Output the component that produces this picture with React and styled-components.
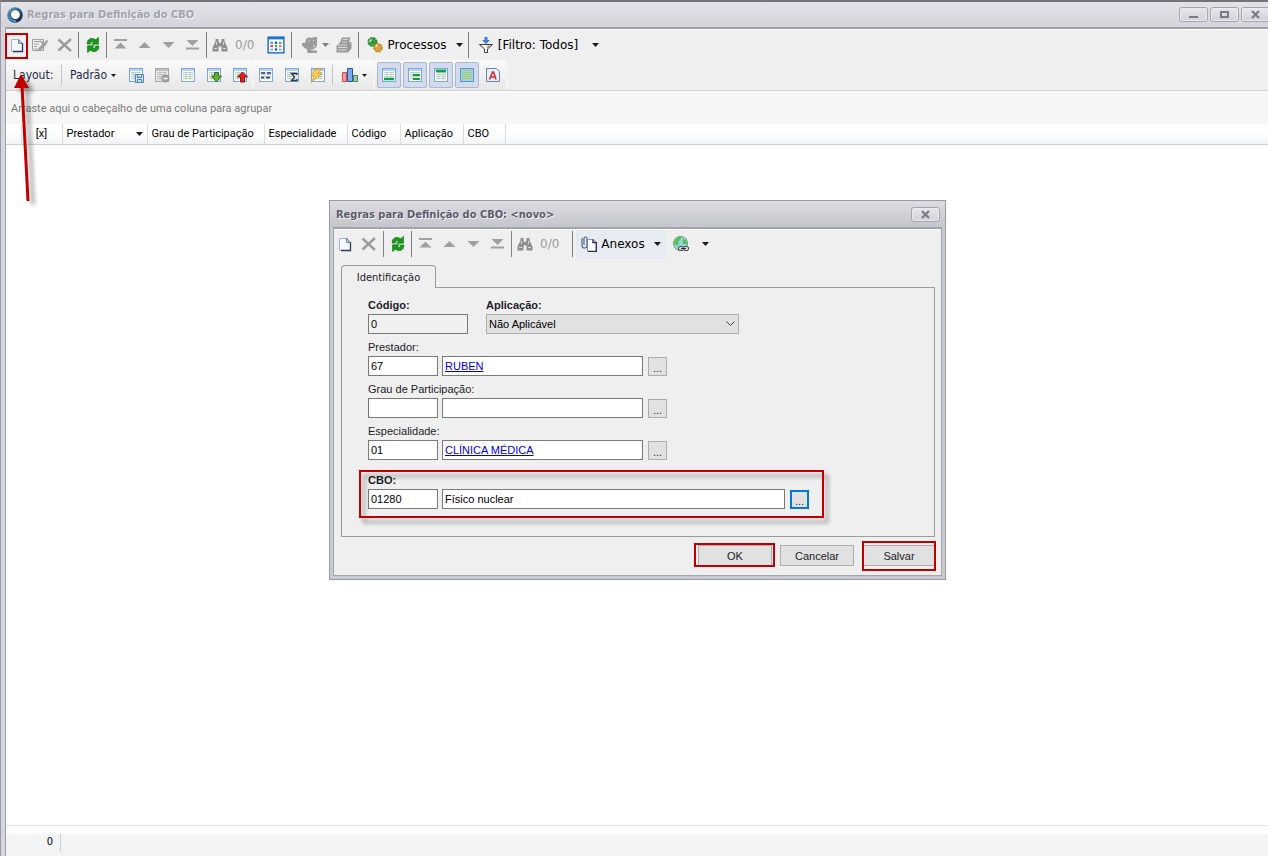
import React, {useState} from 'react';
import styled, {createGlobalStyle, css} from 'styled-components';

const uiFont = '"DejaVu Sans Condensed", "DejaVu Sans", sans-serif';
const toolFont = '"DejaVu Sans", sans-serif';
const gridFont = 'Roboto, sans-serif';
const formFont = '"Liberation Sans", sans-serif';
const red = '#c00000';

const GlobalStyle = createGlobalStyle`
  * {
    box-sizing: border-box;
  }
  body {
    margin: 0;
    background: #ffffff;
    font-family: ${uiFont};
    font-size: 11px;
    color: #000000;
  }
  button, input, select {
    font: inherit;
    color: inherit;
    margin: 0;
  }
`;

/* ---------- main window ---------- */

const Window = styled.div`
  position: relative;
  display: flex;
  flex-direction: column;
  min-height: 100vh;
  overflow: hidden;
  border-top: 2px solid #747476;
  border-left: 1px solid #9a9aa6;
  background: #d6d6de;
`;

const TitleBar = styled.header`
  display: flex;
  align-items: center;
  gap: 4px;
  height: 25px;
  padding-left: 6px;
  background: linear-gradient(#e3e3e9, #d3d3da);
`;

const Title = styled.h1`
  flex: 1;
  margin: 0;
  font-size: 11px;
  font-weight: bold;
  color: ${(props) => props.$active ? '#5c5c6e' : '#a2a2ac'};
  text-shadow: 1px 1px 0 #f2f2f6;
`;

const CaptionButton = styled.button`
  display: flex;
  align-items: center;
  justify-content: center;
  width: 29px;
  height: 15px;
  padding: 0;
  border: 1px solid #a4a4ae;
  border-radius: 3px;
  background: linear-gradient(#e8e8ec, #d0d0d6);
  box-shadow: inset 0 0 0 1px #ececf0;
`;

const CaptionButtons = styled.div`
  display: flex;
  gap: 2px;
  margin-right: -2px;
`;

const Client = styled.main`
  display: flex;
  flex: 1;
  flex-direction: column;
  margin-left: 4px;
  border-top: 2px solid #9c9ca4;
  border-left: 1px solid #a0a0ac;
  background: #ffffff;
`;

/* ---------- toolbars ---------- */

const Toolbar = styled.div`
  display: flex;
  align-items: center;
  height: ${(props) => props.$height || 31}px;
  border-top: 1px solid #ffffff;
  background: #efefef;
  font-family: ${toolFont};
  font-size: 12px;
  color: #000000;
`;

const ToolButton = styled.button`
  position: relative;
  display: flex;
  align-items: center;
  justify-content: center;
  gap: 4px;
  width: ${(props) => props.$width || 24}px;
  height: 26px;
  padding: 0;
  border: 0;
  background: transparent;
  white-space: nowrap;
  svg {
    flex: none;
  }
`;

const Divider = styled.span`
  width: 1px;
  height: 26px;
  margin: 0 ${(props) => props.$gap || 2}px;
  background: #808080;
`;

const Counter = styled.span`
  width: 34px;
  padding-left: 4px;
  color: #9c9c9c;
`;

const LayoutBar = styled.div`
  display: flex;
  align-items: stretch;
  height: 31px;
  border-bottom: 1px solid #d2d2d2;
  background: #efefef;
  font-size: 12px;
  color: #1e2a48;
`;

const BarGroup = styled.div`
  display: flex;
  align-items: center;
  gap: 2px;
  padding: 0 ${(props) => props.$end || 0}px 0 ${(props) => props.$start || 0}px;
  border-right: 2px solid #f4f4f4;
  background: linear-gradient(#fbfbfb, #e7e7e7);
`;

const BarButton = styled.button`
  display: flex;
  align-items: center;
  justify-content: center;
  gap: 4px;
  width: ${(props) => props.$width || 24}px;
  height: 26px;
  padding: 0;
  border: 1px solid transparent;
  border-radius: 2px;
  background: transparent;
  svg {
    flex: none;
  }
  ${(props) => props.$on && css`
    border-color: #aab8d4;
    background: #d3dcec;
  `}
`;

const BarLabel = styled.span`
  width: 46px;
`;

const BarDivider = styled.span`
  width: 1px;
  height: 20px;
  background: #c4c4c8;
`;

/* ---------- grid ---------- */

const GroupPanel = styled.div`
  display: flex;
  align-items: center;
  height: 33px;
  padding-left: 5px;
  border-top: 2px solid #fbfbfb;
  background: #f6f6f6;
  font-family: ${gridFont};
  color: #7c7c7c;
`;

const GridTable = styled.table`
  width: 100%;
  table-layout: fixed;
  border-collapse: collapse;
  font-family: ${gridFont};
`;

const HeadCell = styled.th`
  width: ${(props) => props.$width ? `${props.$width}px` : 'auto'};
  height: 20px;
  padding: 0 4px;
  border-right: 1px solid #dcdce0;
  border-bottom: 1px solid #d0d0d4;
  background: linear-gradient(#ffffff 40%, #f2f3f5);
  font-weight: normal;
  text-align: ${(props) => props.$center ? 'center' : 'left'};
  white-space: nowrap;
  &:last-child {
    border-right: 0;
  }
`;

const SortLabel = styled.span`
  display: flex;
  align-items: center;
  justify-content: space-between;
`;

const GridFooter = styled.footer`
  margin-top: auto;
  padding-top: 8px;
  border-top: 1px solid #e6e6e8;
`;

const FooterCells = styled.div`
  display: flex;
  height: 22px;
  background: #f3f4f6;
`;

const FooterCount = styled.span`
  width: 55px;
  height: 18px;
  padding-right: 7px;
  border-right: 1px solid #cfcfd3;
  line-height: 15px;
  text-align: right;
`;

/* ---------- dialog ---------- */

const Dialog = styled.section`
  position: absolute;
  top: 198px;
  left: 328px;
  width: 617px;
  padding: 0 3px 3px;
  border: 1px solid #9a9aa6;
  background: #c9c9d1;
`;

const DialogTitle = styled.header`
  display: flex;
  align-items: center;
  height: 26px;
  margin: 0 -3px;
  padding: 0 5px 0 6px;
  background: linear-gradient(#dcdce1, #c5c5cc);
`;

const DialogBody = styled.div`
  border: 1px solid #a4a4ac;
  border-top-width: 2px;
  background: #efefef;
  font-family: ${formFont};
  color: #1c1c28;
`;

const SplitButton = styled.div`
  display: flex;
  height: 28px;
  margin-left: 1px;
  border: 1px solid #e2eaf4;
  background: #e8ecf2;
`;

const Tabs = styled.div`
  margin: 7px 6px 0 7px;
`;

const Tab = styled.button`
  position: relative;
  display: block;
  width: 95px;
  height: 23px;
  margin-bottom: -1px;
  padding: 0;
  border: 1px solid #9c9c9c;
  border-bottom: 0;
  border-radius: 4px 4px 0 0;
  background: #efefef;
  font-size: 11px;
  font-family: ${uiFont};
`;

const TabPanel = styled.form`
  display: flex;
  flex-direction: column;
  align-items: flex-start;
  gap: 7px;
  padding: 11px 26px 27px;
  border: 1px solid #9c9c9c;
`;

const FieldRow = styled.div`
  display: flex;
  gap: 18px;
`;

const Field = styled.div`
  position: relative;
  margin-top: ${(props) => props.$spaced ? 7 : 0}px;
`;

const Label = styled.label`
  display: block;
  height: 15px;
  line-height: 13px;
  font-weight: ${(props) => props.$strong ? 'bold' : 'normal'};
`;

const Controls = styled.div`
  display: flex;
  gap: 4px;
`;

const TextBox = styled.input`
  display: block;
  width: ${(props) => props.$width}px;
  height: 20px;
  padding: 0 2px;
  border: 1px solid #7a7a7a;
  border-radius: 0;
  outline: 0;
  background: ${(props) => props.readOnly ? '#f0f0f0' : '#ffffff'};
  color: #000000;
`;

const LinkBox = styled.div`
  width: 201px;
  height: 20px;
  padding: 0 2px;
  border: 1px solid #7a7a7a;
  background: #ffffff;
  line-height: 18px;
  a {
    color: #0000e0;
  }
`;

const SelectWrap = styled.div`
  position: relative;
  svg {
    position: absolute;
    top: 7px;
    right: 4px;
    pointer-events: none;
  }
`;

const Select = styled.select`
  appearance: none;
  display: block;
  width: 253px;
  height: 20px;
  padding: 0 2px;
  border: 1px solid #adadad;
  border-radius: 0;
  background: #e1e1e1;
  color: #000000;
`;

const LookupButton = styled.button`
  align-self: flex-end;
  width: 19px;
  height: 19px;
  margin-left: 1px;
  padding: 3px 0 0;
  border: ${(props) => props.$focused ? '2px solid #0078d7' : '1px solid #adadad'};
  background: #e1e1e1;
  line-height: 12px;
`;

const Actions = styled.div`
  display: flex;
  justify-content: flex-end;
  gap: 8px;
  padding: 8px 5px 9px;
`;

const ActionButton = styled.button`
  position: relative;
  width: 74px;
  height: 21px;
  padding: 0;
  border: 1px solid #adadad;
  background: #e1e1e1;
`;

/* ---------- annotations ---------- */

const Marker = styled.span`
  position: absolute;
  inset: ${(props) => props.$inset};
  border: 2px solid ${red};
  pointer-events: none;
  filter: ${(props) => props.$shadow ? 'drop-shadow(4px 5px 2px rgba(0, 0, 0, 0.4))' : 'none'};
`;

const Arrow = styled.svg`
  position: absolute;
  top: 70px;
  left: 9px;
  pointer-events: none;
  g {
    filter: drop-shadow(5px 4px 2px rgba(0, 0, 0, 0.4));
  }
`;

/* ---------- icons ---------- */

const Icon = ({size = 16, children}) => (
  <svg width={size} height={size} viewBox='0 0 16 16' aria-hidden='true'>{children}</svg>
);

const Caret = ({small, gray}) => (
  <svg width={small ? 5 : 7} height={small ? 3 : 4} viewBox='0 0 8 4' preserveAspectRatio='none' aria-hidden='true'>
    <path d='M0 0h8L4 4z' fill={gray ? '#808080' : '#1c1c1c'} />
  </svg>
);

const AppIcon = () => (
  <svg width='16' height='16' viewBox='0 0 16 16' aria-hidden='true'>
    <defs>
      <linearGradient id='ring' x1='0' y1='0' x2='1' y2='1'>
        <stop offset='0' stopColor='#8cc4d8' />
        <stop offset='0.4' stopColor='#2a6490' />
        <stop offset='1' stopColor='#0a1c40' />
      </linearGradient>
    </defs>
    <circle cx='8' cy='8' r='7.8' fill='url(#ring)' />
    <circle cx='8.4' cy='7.6' r='4.4' fill='#ffffff' />
    <path d='M2 9.500a6.200 6.200 0 0 0 7 4.500' stroke='#4fa3c8' strokeWidth='1.600' fill='none' />
  </svg>
);

const NewIcon = () => (
  <Icon>
    <path d='M2.500 2.500h7l4 4v8h-11z' fill='#f6f9ff' stroke='#a4b4d8' />
    <path d='M13.500 6v8.500H4' stroke='#2b3566' strokeWidth='1.300' fill='none' />
    <path d='M9.500 2.500v4h4z' fill='#c9d2ea' stroke='#5c6898' strokeWidth='0.800' />
  </Icon>
);

const EditIcon = () => (
  <Icon>
    <path d='M.5 2.500h11v11H.5z' fill='#efefef' stroke='#a0a0a0' />
    <path d='M2 4.500h8M2 7h5M2 9.500h3M2 12h5' stroke='#a0a0a0' strokeWidth='1.200' />
    <path d='M8 3l4 3 3-3.500 1 1.500-2 4-5 5-3 1 1-3.500 3-3z' fill='#a0a0a0' />
  </Icon>
);

const DeleteIcon = () => (
  <Icon><path d='M1.500 2.500L14 14M14 2L1.500 13.500' stroke='#9c9c9c' strokeWidth='2.400' /></Icon>
);

const arrowShape = 'M2.200 7C1.800 3.200 5 .6 8.600 1.800L10.800 2.800 13.400.4V7.200H6.600L8.800 5C7 4.200 5.600 4.800 5.200 7z';

const RefreshIcon = () => (
  <Icon>
    <g fill='#12a012' stroke='#066006' strokeWidth='0.600'>
      <path d={arrowShape} />
      <path d={arrowShape} transform='rotate(180 8 8)' />
    </g>
  </Icon>
);

const navPaths = {
  first: 'M2 2h13v2H2zM8.500 5.500l6 6h-12z',
  up: 'M8.500 5l6 6h-12z',
  down: 'M2.500 5h12l-6 6z',
  last: 'M2.500 3h12l-6 6zM2 10.500h13v2H2z',
};

const NavIcon = ({kind}) => (
  <Icon><path d={navPaths[kind]} fill='#a0a0a0' /></Icon>
);

const FindIcon = () => (
  <Icon>
    <path d='M3.500 2h3v2.500l1 1.500h1l1-1.500V2h3v2.500l3 6V14.500H9.500V9.500h-3v5H.5v-4l3-6z' fill='#8f8f8f' />
    <path d='M2 11.500h3M11 11.500h3M4.500 5v3M11.500 5v3' stroke='#d8d8d8' />
  </Icon>
);

const CalendarIcon = () => (
  <Icon size={18}>
    <rect x='1' y='1' width='14' height='14' fill='#ffffff' stroke='#0e62c4' strokeWidth='1.200' />
    <path d='M1 2h14' stroke='#1674dc' strokeWidth='2' />
    <path d='M3 5h2.500v2H3zM10.500 5H13v2h-2.500z' fill='#5ca4d8' />
    <path d='M7 5h2v2H7z' fill='#24508c' />
    <path d='M3 8h2.500v2H3z' fill='#e05050' />
    <path d='M7 8h2v2H7z' fill='#3cae60' />
    <path d='M10.500 8H13v2h-2.500z' fill='#e09040' />
    <path d='M3 11h2.500v2H3zM10.500 11H13v2h-2.500z' fill='#8cb8e0' />
    <path d='M7 11h2v2H7z' fill='#244c9c' />
  </Icon>
);

const ExportIcon = () => (
  <Icon>
    <path d='M4 2l2-1.500h3l1 .5 2-1h3v8l-1 2.500-3 2v1h4V16H5.500l-.5-4-2-.5L0 8.500V6h3z' fill='#9c9c9c' />
    <path d='M9 13h2M11 9.500l2-1' stroke='#ececec' />
    <path d='M7 3.500h1M11 3.500h1' stroke='#d0d0d0' />
  </Icon>
);

const PrintIcon = () => (
  <Icon>
    <path d='M6 .5h8.500l-1.500 5 2.500-.5v6.500l-3.500 4H.5V9L4 5.500z' fill='#9a9a9a' />
    <path d='M7 2.500h5M6 5h5M2 8h9M2 10.500h9M2 13h8.500' stroke='#ececec' strokeWidth='0.800' />
  </Icon>
);

const GearsIcon = () => (
  <Icon>
    <circle cx='5.500' cy='5' r='3.800' fill='#40b040' stroke='#2c8c30' strokeWidth='2.400' strokeDasharray='2.400 0.600' />
    <circle cx='11' cy='10.800' r='3.600' fill='#f2bc3c' stroke='#c48a20' strokeWidth='2.400' strokeDasharray='2.400 0.600' />
    <path d='M2.500 4.500l2-2M8.500 9.500l2-2' stroke='#f0f8d8' strokeWidth='1.200' />
    <circle cx='5.800' cy='5.200' r='1' fill='#1c641c' />
    <circle cx='11.200' cy='11' r='1.200' fill='#fff0b8' stroke='#80560c' strokeWidth='0.600' />
  </Icon>
);

const FilterIcon = () => (
  <Icon>
    <path d='M6.500 0h3v3H12L8 7 4 3h2.500z' fill='#3c78d8' />
    <path d='M1.500 7.500h13L9.500 12v3.500h-3V12z' fill='#f4f4f4' stroke='#3a3a3a' />
    <path d='M9.500 8.500h3L9 11.500z' fill='#909090' />
  </Icon>
);

const Sheet = ({gray}) => (
  <>
    <rect x='1.500' y='1.500' width='13' height='13' fill={gray ? '#e8e8e8' : '#ffffff'} stroke={gray ? '#a8a8a8' : '#7ca8dc'} />
    <path d='M2 3h12' stroke={gray ? '#c0c0c0' : '#b4d4f4'} strokeWidth='2' />
    <path d='M3 5.500h10M3 7.500h10M3 9.500h10M3 11.500h10M6 5v8M10 5v8' stroke={gray ? '#b4b4b4' : '#a4c0b0'} strokeWidth='0.700' />
  </>
);

const sheetMarks = {
  save: <path d='M7.500 7.500h8v8h-8zM9.500 7.500v3h4v-3M9.500 15.500v-3h4v3' fill='#cfe2f8' stroke='#4c84c8' />,
  remove: <><circle cx='11.500' cy='11.500' r='4' fill='#9c9c9c' /><path d='M9.500 11.500h4' stroke='#fff' strokeWidth='1.500' /></>,
  plain: null,
  down: <path d='M8.500 5.500h4V9h3L10.500 15 5.500 9h3z' fill='#62b030' stroke='#2c701c' />,
  up: <path d='M10.500 5l5 5h-3v5h-4v-5h-3z' fill='#e02020' stroke='#8c1010' />,
  columns: <path d='M3 6h4M9 6h4M3 10.500h3M8 10.500h4' stroke='#283c80' strokeWidth='1.600' />,
  sum: <path d='M13 8V6.500H7.500l3 3.500-3 3.500H13V12' stroke='#303848' strokeWidth='1.300' fill='none' />,
  bolt: <path d='M5 2h7L8 6.500h4L1 15.500l3-6.500H.5z' fill='#f6c850' stroke='#c89030' strokeWidth='0.600' />,
  footer: <path d='M3 12h10' stroke='#0ba040' strokeWidth='2.500' />,
  groupFooter: <path d='M6 8h7M6 12h7' stroke='#0ba040' strokeWidth='2' />,
  header: <path d='M3 4h10' stroke='#0ba040' strokeWidth='2.500' />,
};

const SheetIcon = ({kind}) => (
  <Icon><Sheet gray={kind === 'remove'} />{sheetMarks[kind]}</Icon>
);

const StripedIcon = () => (
  <Icon>
    <rect x='1.500' y='1.500' width='13' height='13' fill='#a8d0e8' stroke='#5c94d4' />
    <path d='M3 3.500h10M3 5.500h10M3 7.500h10M3 9.500h10M3 11.500h10' stroke='#9cd060' />
  </Icon>
);

const ChartIcon = () => (
  <Icon>
    <path d='M.5 5.500h4v9h-4z' fill='#f49c9c' stroke='#d04848' />
    <path d='M5.500 1.500h5v13h-5z' fill='#7caaec' stroke='#2858a8' />
    <path d='M11.500 8.500h4v6h-4z' fill='#9cccb0' stroke='#448864' />
  </Icon>
);

const FontIcon = () => (
  <Icon>
    <path d='M1.500 1.500h10l3 3v10h-13z' fill='#e4f0fc' stroke='#6488b4' />
    <path d='M4.500 12.500L7.500 5h1l2.500 7.500M5.500 10h4.500' stroke='#d83030' strokeWidth='1.700' fill='none' />
  </Icon>
);

const AttachIcon = () => (
  <Icon>
    <path d='M6.500 3.500h6l3 3v9h-9z' fill='#ffffff' stroke='#8c94bc' />
    <path d='M15.300 6v9.500H7M12 3.500v3h3' stroke='#30285c' strokeWidth='1.400' fill='none' />
    <path d='M1 2v7.500a2 2 0 0 0 5 0V2.500a1.500 1.500 0 0 0-3 0v6.500' stroke='#4c6c84' strokeWidth='1.200' fill='none' />
  </Icon>
);

const GlobeIcon = () => (
  <Icon>
    <circle cx='7.500' cy='7.500' r='7' fill='#94d4dc' stroke='#5ca474' />
    <path d='M1.500 5q3-5 7-4L7 4 5 5.500 6 8 4 9.500 1 8zM9.500 3l4 1.500.5 4L10 8z' fill='#58c058' />
    <rect x='5.500' y='10.500' width='5' height='4' rx='1.500' fill='#d8d8d8' stroke='#4c4c4c' />
    <rect x='10.500' y='10.500' width='5' height='4' rx='1.500' fill='#d8d8d8' stroke='#4c4c4c' />
    <path d='M8 12.500h5' stroke='#303030' />
  </Icon>
);

const Glyph = ({kind}) => (
  <svg width='10' height='9' viewBox='0 0 10 9' aria-hidden='true'>
    {kind === 'min' && <path d='M0 7h9' stroke='#7a7a88' strokeWidth='2' />}
    {kind === 'max' && <path d='M1 2h7v5H1z' stroke='#7a7a88' strokeWidth='2' fill='none' />}
    {kind === 'close' && <path d='M1 1l7 7M8 1L1 8' stroke='#7a7a88' strokeWidth='2.200' />}
  </svg>
);

/* ---------- parts ---------- */

const Navigation = () => (
  <>
    <ToolButton aria-label='Primeiro'><NavIcon kind='first' /></ToolButton>
    <ToolButton aria-label='Anterior'><NavIcon kind='up' /></ToolButton>
    <ToolButton aria-label='Próximo'><NavIcon kind='down' /></ToolButton>
    <ToolButton aria-label='Último'><NavIcon kind='last' /></ToolButton>
    <Divider />
    <ToolButton aria-label='Localizar' $width={22}><FindIcon /></ToolButton>
    <Counter>0/0</Counter>
  </>
);

const MainToolbar = () => (
  <Toolbar>
    <ToolButton aria-label='Novo' $width={21}>
      <NewIcon />
      <Marker $inset='1px -1px -1px -1px' />
    </ToolButton>
    <ToolButton aria-label='Editar' $width={26}><EditIcon /></ToolButton>
    <ToolButton aria-label='Excluir' $width={23}><DeleteIcon /></ToolButton>
    <Divider />
    <ToolButton aria-label='Atualizar'><RefreshIcon /></ToolButton>
    <Divider $gap={1} />
    <Navigation />
    <ToolButton aria-label='Calendário' $width={22}><CalendarIcon /></ToolButton>
    <Divider $gap={4} />
    <ToolButton aria-label='Exportar' $width={38}><ExportIcon /><Caret gray /></ToolButton>
    <ToolButton aria-label='Imprimir' $width={20}><PrintIcon /></ToolButton>
    <Divider $gap={4} />
    <ToolButton $width={88}><GearsIcon />Processos</ToolButton>
    <ToolButton aria-label='Mais processos' $width={16}><Caret /></ToolButton>
    <Divider $gap={1} />
    <ToolButton $width={116}><FilterIcon />[Filtro: Todos]</ToolButton>
    <ToolButton aria-label='Mais filtros' $width={18}><Caret /></ToolButton>
  </Toolbar>
);

const LayoutToolbar = () => {
  const [toggles, setToggles] = useState({footer: true, groupFooter: true, header: true, striped: true});
  const flip = (key) => setToggles({...toggles, [key]: !toggles[key]});

  return (
    <LayoutBar>
      <BarGroup $start={7}>
        <BarLabel>Layout:</BarLabel>
        <BarDivider />
        <BarButton $width={58}>Padrão<Caret small /></BarButton>
        {['save', 'remove', 'plain', 'down', 'up'].map((kind) => (
          <BarButton key={kind} aria-label={kind}><SheetIcon kind={kind} /></BarButton>
        ))}
      </BarGroup>
      <BarGroup>
        <BarButton aria-label='Colunas'><SheetIcon kind='columns' /></BarButton>
        <BarButton aria-label='Soma'><SheetIcon kind='sum' /></BarButton>
        <BarButton aria-label='Formatação'><SheetIcon kind='bolt' /></BarButton>
        <BarDivider />
        <BarButton aria-label='Gráfico' $width={38}><ChartIcon /><Caret small /></BarButton>
      </BarGroup>
      <BarGroup $start={2} $end={1}>
        {['footer', 'groupFooter', 'header'].map((kind) => (
          <BarButton key={kind} aria-label={kind} $on={toggles[kind]} onClick={() => flip(kind)}>
            <SheetIcon kind={kind} />
          </BarButton>
        ))}
        <BarButton aria-label='Linhas' $on={toggles.striped} onClick={() => flip('striped')}><StripedIcon /></BarButton>
        <BarButton aria-label='Fonte'><FontIcon /></BarButton>
      </BarGroup>
    </LayoutBar>
  );
};

const columns = [
  {label: '', width: 15},
  {label: '[x]', width: 41, center: true},
  {label: 'Prestador', width: 85, sorted: true},
  {label: 'Grau de Participação', width: 117},
  {label: 'Especialidade', width: 83},
  {label: 'Código', width: 53},
  {label: 'Aplicação', width: 63},
  {label: 'CBO', width: 42},
  {label: ''},
];

const Grid = () => (
  <GridTable>
    <thead>
      <tr>
        {columns.map((col, i) => (
          <HeadCell key={i} $width={col.width} $center={col.center}>
            {col.sorted ? <SortLabel>{col.label}<Caret /></SortLabel> : col.label}
          </HeadCell>
        ))}
      </tr>
    </thead>
  </GridTable>
);

const LookupField = ({id, label, code, text, link, strong, wide, focused}) => (
  <Field $spaced={strong}>
    <Label htmlFor={id} $strong={strong}>{label}</Label>
    <Controls>
      <TextBox id={id} $width={70} defaultValue={code} />
      {link
        ? <LinkBox><a href='#registro'>{text}</a></LinkBox>
        : <TextBox $width={wide ? 343 : 201} defaultValue={text} aria-label={`${label} descrição`} />}
      <LookupButton type='button' $focused={focused} aria-label={`Buscar ${label}`}>...</LookupButton>
    </Controls>
    {focused && <Marker $inset='-4px -15px -9px -9px' $shadow />}
  </Field>
);

const RuleDialog = () => (
  <Dialog role='dialog' aria-label='Regras para Definição do CBO: <novo>'>
    <DialogTitle>
      <Title as='h2' $active>Regras para Definição do CBO: &lt;novo&gt;</Title>
      <CaptionButton aria-label='Fechar'><Glyph kind='close' /></CaptionButton>
    </DialogTitle>
    <DialogBody>
      <Toolbar $height={29}>
        <ToolButton aria-label='Novo' $width={22}><NewIcon /></ToolButton>
        <ToolButton aria-label='Excluir' $width={25}><DeleteIcon /></ToolButton>
        <Divider />
        <ToolButton aria-label='Atualizar'><RefreshIcon /></ToolButton>
        <Divider $gap={1} />
        <Navigation />
        <Divider />
        <SplitButton>
          <ToolButton $width={72}><AttachIcon />Anexos</ToolButton>
          <ToolButton aria-label='Mais anexos' $width={16}><Caret /></ToolButton>
        </SplitButton>
        <ToolButton aria-label='Web' $width={30}><GlobeIcon /></ToolButton>
        <ToolButton aria-label='Mais web' $width={18}><Caret /></ToolButton>
      </Toolbar>
      <Tabs>
        <Tab type='button' role='tab' aria-selected='true'>Identificação</Tab>
        <TabPanel>
          <FieldRow>
            <Field>
              <Label htmlFor='codigo' $strong>Código:</Label>
              <TextBox id='codigo' $width={100} defaultValue='0' readOnly />
            </Field>
            <Field>
              <Label htmlFor='aplicacao' $strong>Aplicação:</Label>
              <SelectWrap>
                <Select id='aplicacao'><option>Não Aplicável</option></Select>
                <svg width='9' height='6' viewBox='0 0 9 6' aria-hidden='true'>
                  <path d='M.5.5l4 4 4-4' stroke='#404040' fill='none' />
                </svg>
              </SelectWrap>
            </Field>
          </FieldRow>
          <LookupField id='prestador' label='Prestador:' code='67' text='RUBEN' link />
          <LookupField id='grau' label='Grau de Participação:' code='' text='' />
          <LookupField id='especialidade' label='Especialidade:' code='01' text='CLÍNICA MÉDICA' link />
          <LookupField id='cbo' label='CBO:' code='01280' text='Físico nuclear' strong wide focused />
        </TabPanel>
      </Tabs>
      <Actions>
        <ActionButton>OK<Marker $inset='-3px -4px -2px -5px' /></ActionButton>
        <ActionButton>Cancelar</ActionButton>
        <ActionButton>Salvar<Marker $inset='-5px -1px -6px -1px' /></ActionButton>
      </Actions>
    </DialogBody>
  </Dialog>
);

const App = () => (
  <Window>
    <GlobalStyle />
    <TitleBar>
      <AppIcon />
      <Title>Regras para Definição do CBO</Title>
      <CaptionButtons>
        <CaptionButton aria-label='Minimizar'><Glyph kind='min' /></CaptionButton>
        <CaptionButton aria-label='Maximizar'><Glyph kind='max' /></CaptionButton>
        <CaptionButton aria-label='Fechar'><Glyph kind='close' /></CaptionButton>
      </CaptionButtons>
    </TitleBar>
    <Client>
      <MainToolbar />
      <LayoutToolbar />
      <GroupPanel>Arraste aqui o cabeçalho de uma coluna para agrupar</GroupPanel>
      <Grid />
      <GridFooter>
        <FooterCells><FooterCount>0</FooterCount></FooterCells>
      </GridFooter>
    </Client>
    <RuleDialog />
    <Arrow width='40' height='145' viewBox='0 0 40 145' aria-hidden='true'>
      <g>
        <path d='M12 14l6 115' stroke={red} strokeWidth='3' />
        <path d='M11 2l8 14H4z' fill={red} />
      </g>
    </Arrow>
  </Window>
);

export default App;
